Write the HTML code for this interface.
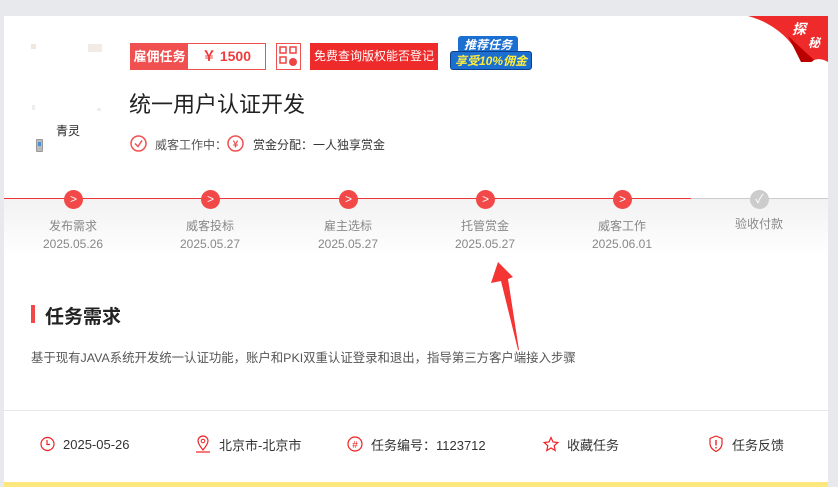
<!DOCTYPE html>
<html><head><meta charset="utf-8"><style>
*{margin:0;padding:0;box-sizing:border-box}
body{width:838px;height:487px;background:#e8e9ec;font-family:"Liberation Sans","Noto Sans CJK SC",sans-serif;position:relative;overflow:hidden}
.card{position:absolute;left:4px;top:16px;width:824px;height:394px;background:#fff}
.foot{position:absolute;left:4px;top:410px;width:824px;height:77px;background:#fff;border-top:1px solid #e8e8e8}
.yel{position:absolute;left:4px;top:482px;width:824px;height:5px;background:#fde77f}
.abs{position:absolute}
.tag{left:130px;top:43px;height:27px;width:136px;border:1px solid #f05050;display:flex}
.tag .a{background:#f05050;color:#fff;font-size:13px;font-weight:bold;width:57px;line-height:25px;text-align:center}
.tag .b{color:#f03c3c;font-weight:bold;font-size:14px;line-height:25px;flex:1;text-align:center}
.btn{left:310px;top:43px;width:128px;height:27px;background:#ee2a2a;color:#fff;font-size:12px;line-height:27px;text-align:center;white-space:nowrap}
.title{left:129px;top:87px;font-size:22px;color:#222}
.meta{top:136px;font-size:12px;color:#555}
.steps{left:4px;top:198px;width:824px;height:60px;background:linear-gradient(#f2f2f2,#fff)}
.dot{width:19px;height:19px;border-radius:50%;background:#f24848;color:#fff;font-size:12px;line-height:19px;text-align:center}
.lbl{font-size:12px;color:#888;text-align:center;width:100px}
.fi{top:434px;height:20px;font-size:13px;color:#333;display:flex;align-items:center;gap:8px;white-space:nowrap}
.fi svg{display:block}
</style></head><body>
<div class="card"></div>
<div class="foot"></div>
<div class="yel"></div>
<div class="abs" style="left:31px;top:44px;width:5px;height:5px;background:#eee8e0"></div>
<div class="abs" style="left:88px;top:44px;width:14px;height:8px;background:#f0ebe4"></div>
<div class="abs" style="left:32px;top:105px;width:3px;height:5px;background:#eee"></div>
<div class="abs" style="left:97px;top:108px;width:4px;height:3px;background:#eee"></div>
<div class="abs" style="left:56px;top:122px;font-size:12px;color:#222">青灵</div>
<div class="abs" style="left:36px;top:139px;width:7px;height:13px;background:#bbb;border:1px solid #999;border-radius:1px"><div style="margin:2px 1px;height:4px;background:#4a90d0"></div></div>
<div class="abs tag"><div class="a">雇佣任务</div><div class="b">￥ 1500</div></div>
<div class="abs" style="left:276px;top:43px;width:25px;height:27px;border:1px solid #f05050"><svg width="23" height="25"><rect x="3" y="3" width="6" height="6" fill="none" stroke="#e44" stroke-width="1.5"/><rect x="13" y="3" width="6" height="6" fill="none" stroke="#e44" stroke-width="1.5"/><rect x="3" y="13" width="6" height="6" fill="none" stroke="#e44" stroke-width="1.5"/><circle cx="16" cy="18" r="4" fill="#e44"/></svg></div>
<div class="abs btn">免费查询版权能否登记</div>
<div class="abs" style="left:450px;top:36px;width:104px;height:34px;">
<div style="position:absolute;left:8px;top:0;background:#1b6fd1;color:#fff;font-weight:bold;font-style:italic;font-size:12px;padding:0 6px;border-radius:3px">推荐任务</div>
<div style="position:absolute;left:0;top:15px;background:#1b6fd1;color:#ffec3c;font-weight:bold;font-style:italic;font-size:12px;padding:0 4px;border-radius:3px;border:1px solid #0d3f8a">享受10%佣金</div></div>
<svg class="abs" style="left:748px;top:16px" width="80" height="46"><path d="M0 0H80V46C76 44 72 42 66 44 60 46 58 50 56 52 50 30 30 8 0 0Z" fill="#ee2a2a"/><path d="M40 20L56 52 66 44Z" fill="#b00"/><text x="44" y="18" fill="#fff" font-size="14" font-weight="bold" font-style="italic" font-family="Noto Sans CJK SC">探</text><text x="60" y="31" fill="#fff" font-size="12" font-weight="bold" font-style="italic" font-family="Noto Sans CJK SC">秘</text></svg>
<div class="abs title">统一用户认证开发</div>
<svg class="abs" style="left:130px;top:135px" width="17" height="17"><circle cx="8.5" cy="8.5" r="7.5" fill="none" stroke="#f05050" stroke-width="1.5"/><path d="M5 8.5l3 3 4-6" fill="none" stroke="#f05050" stroke-width="1.5"/></svg>
<div class="abs meta" style="left:155px">威客工作中：</div>
<svg class="abs" style="left:227px;top:135px" width="17" height="17"><circle cx="8.5" cy="8.5" r="7.5" fill="none" stroke="#f05050" stroke-width="1.5"/><text x="8.5" y="12.5" text-anchor="middle" font-size="10" fill="#f05050" font-weight="bold">¥</text></svg>
<div class="abs meta" style="left:253px;color:#333">赏金分配：一人独享赏金</div>
<div class="abs steps"></div>
<div class="abs" style="left:4px;top:198px;width:687px;height:1px;background:#e33"></div>
<div class="abs" style="left:691px;top:198px;width:137px;height:1px;background:#ccc"></div>
<div class="abs dot" style="left:64px;top:190px">&gt;</div>
<div class="abs dot" style="left:201px;top:190px">&gt;</div>
<div class="abs dot" style="left:339px;top:190px">&gt;</div>
<div class="abs dot" style="left:476px;top:190px">&gt;</div>
<div class="abs dot" style="left:613px;top:190px">&gt;</div>
<div class="abs dot" style="left:750px;top:190px;background:#ccc">✓</div>
<div class="abs lbl" style="left:23px;top:217px">发布需求<br><span style="line-height:20px">2025.05.26</span></div>
<div class="abs lbl" style="left:160px;top:217px">威客投标<br><span style="line-height:20px">2025.05.27</span></div>
<div class="abs lbl" style="left:298px;top:217px">雇主选标<br><span style="line-height:20px">2025.05.27</span></div>
<div class="abs lbl" style="left:435px;top:217px">托管赏金<br><span style="line-height:20px">2025.05.27</span></div>
<div class="abs lbl" style="left:572px;top:217px">威客工作<br><span style="line-height:20px">2025.06.01</span></div>
<div class="abs lbl" style="left:709px;top:215px">验收付款</div>
<div class="abs" style="left:31px;top:305px;width:4px;height:18px;background:#f24848"></div>
<div class="abs" style="left:45px;top:302px;font-size:19px;font-weight:bold;color:#222">任务需求</div>
<div class="abs" style="left:31px;top:348px;font-size:12.4px;color:#555;white-space:nowrap">基于现有JAVA系统开发统一认证功能，账户和PKI双重认证登录和退出，指导第三方客户端接入步骤</div>
<svg class="abs" style="left:480px;top:255px" width="50" height="100"><path d="M18 7L11 28 21 26 38 95 39 95 28 24 33 22Z" fill="#f53434"/></svg>
<div class="abs fi" style="left:40px"><svg width="15" height="16"><circle cx="7.5" cy="8" r="6.5" fill="none" stroke="#e22" stroke-width="1.2"/><path d="M7 4v4.5h3" fill="none" stroke="#e22" stroke-width="1.2"/></svg>2025-05-26</div>
<div class="abs fi" style="left:195px"><svg width="16" height="18"><path d="M8 15C4 10 3 8 3 6a5 5 0 0 1 10 0c0 2-1 4-5 9z" fill="none" stroke="#e22" stroke-width="1.2"/><circle cx="8" cy="6" r="1.8" fill="none" stroke="#e22"/><path d="M1 17h14" stroke="#e22" stroke-width="1.2"/></svg>北京市-北京市</div>
<div class="abs fi" style="left:347px"><svg width="16" height="16"><circle cx="8" cy="8" r="7" fill="none" stroke="#e22" stroke-width="1.2"/><text x="8" y="12" text-anchor="middle" font-size="10" fill="#e22">#</text></svg>任务编号：1123712</div>
<div class="abs fi" style="left:543px"><svg width="16" height="16"><path d="M8 1.5l2 4.5 4.8.5-3.6 3.2 1 4.8L8 12l-4.2 2.5 1-4.8L1.2 6.5 6 6z" fill="none" stroke="#e22" stroke-width="1.2"/></svg>收藏任务</div>
<div class="abs fi" style="left:708px"><svg width="16" height="18"><path d="M8 1L2 3.5v5c0 4 3 6.5 6 8 3-1.5 6-4 6-8v-5z" fill="none" stroke="#e22" stroke-width="1.2"/><path d="M8 5v5.5M8 12v1.5" stroke="#e22" stroke-width="1.4"/></svg>任务反馈</div>
</body></html>
